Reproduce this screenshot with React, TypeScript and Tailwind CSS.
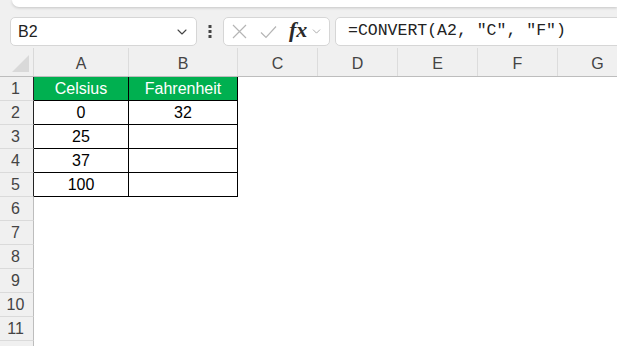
import React from "react";
import { ChevronDown } from "lucide-react";

const COLUMNS = [
  { label: "A", cls: "w-[95px]" },
  { label: "B", cls: "w-[109px]" },
  { label: "C", cls: "w-[80px]" },
  { label: "D", cls: "w-[80px]" },
  { label: "E", cls: "w-[80px]" },
  { label: "F", cls: "w-[80px]" },
  { label: "G", cls: "w-[80px]" },
];

const DATA: [string, string][] = [
  ["0", "32"],
  ["25", ""],
  ["37", ""],
  ["100", ""],
];

function FormulaBar() {
  return (
    <div className="flex items-center h-[29px] mt-[10px] pl-[10px]">
      <div className="flex items-center justify-between w-[187px] h-full bg-white border border-[#d6d6d6] rounded-[5px] pl-[7px] pr-[6px]">
        <span className="text-[16px] text-[#222]">B2</span>
        <ChevronDown className="w-[16px] h-[16px] text-[#444]" strokeWidth={1.6} />
      </div>
      <div className="w-[26px] flex justify-center">
        <svg width="4" height="13" viewBox="0 0 4 13">
          <rect x="0.5" y="0" width="3" height="3" fill="#444" />
          <rect x="0.5" y="5" width="3" height="3" fill="#444" />
          <rect x="0.5" y="10" width="3" height="3" fill="#444" />
        </svg>
      </div>
      <div className="flex items-center w-[107px] h-full bg-white border border-[#d6d6d6] rounded-[5px] pl-[8px]">
        <svg width="15" height="15" viewBox="0 0 15 15" className="mr-[13px]">
          <path d="M1 1 L14 14 M14 1 L1 14" stroke="#b5b5b5" strokeWidth="1.2" fill="none" />
        </svg>
        <svg width="17" height="14" viewBox="0 0 17 14" className="mr-[12px]">
          <path d="M1 7.5 L6 12.5 L16 1.5" stroke="#b5b5b5" strokeWidth="1.2" fill="none" />
        </svg>
        <span className="text-[22px] italic font-bold leading-none text-[#2a2a2a] font-['Liberation_Serif',serif] mb-[3px]">
          fx
        </span>
        <ChevronDown className="w-[13px] h-[13px] ml-[3px] text-[#999]" strokeWidth={1.5} />
      </div>
      <div className="flex items-center flex-1 h-full ml-[5px] -mr-[10px] bg-white border border-[#d6d6d6] rounded-[5px] pl-[12px]">
        <span className="text-[16.5px] text-[#222] font-['Liberation_Mono',monospace]">=CONVERT(A2, "C", "F")</span>
      </div>
    </div>
  );
}

function ColumnHeader() {
  return (
    <div className="flex h-[29px] mt-[2px] border-b border-[#bdbdbd]">
      <div className="w-[34px] shrink-0 border-r border-[#d9d9d9] flex items-end justify-end pr-[4px] pb-[4px]">
        <svg width="17" height="17" viewBox="0 0 17 17">
          <path d="M17 0 L17 17 L0 17 Z" fill="#d9d9d9" />
        </svg>
      </div>
      {COLUMNS.map((c) => (
        <div
          key={c.label}
          className={`${c.cls} shrink-0 border-r border-[#dcdcdc] flex items-center justify-center pt-[4px] text-[16px] text-[#444]`}
        >
          {c.label}
        </div>
      ))}
    </div>
  );
}

function RowHead({ n, dark }: { n?: number; dark?: boolean }) {
  return (
    <div
      className={`w-[34px] shrink-0 h-full flex items-center justify-center pr-[2px] bg-[#f0f0f0] border-b border-[#dadada] border-r text-[16px] text-[#444] ${
        dark ? "border-r-[#222]" : "border-r-[#bdbdbd]"
      }`}
    >
      {n}
    </div>
  );
}

export default function App() {
  return (
    <div className="w-[617px] h-[346px] overflow-hidden bg-[#f0f0f0] font-['Liberation_Sans',Arial,sans-serif]">
      <div className="h-[7px] ml-[12px] bg-white rounded-bl-[8px] shadow-[0_1px_3px_rgba(0,0,0,0.18)]" />
      <FormulaBar />
      <ColumnHeader />
      <div className="bg-white">
        <div className="flex h-[24px]">
          <RowHead n={1} dark />
          <div className="w-[95px] shrink-0 h-full flex items-center justify-center bg-[#00b050] text-white text-[16px] border-r border-b border-black">
            Celsius
          </div>
          <div className="w-[109px] shrink-0 h-full flex items-center justify-center bg-[#00b050] text-white text-[16px] border-r border-b border-black">
            Fahrenheit
          </div>
        </div>
        {DATA.map(([a, b], i) => (
          <div key={i} className="flex h-[24px]">
            <RowHead n={i + 2} dark />
            <div className="w-[95px] shrink-0 h-full flex items-center justify-center text-black text-[16px] border-r border-b border-black">
              {a}
            </div>
            <div className="w-[109px] shrink-0 h-full flex items-center justify-center text-black text-[16px] border-r border-b border-black">
              {b}
            </div>
          </div>
        ))}
        {[6, 7, 8, 9, 10, 11].map((n) => (
          <div key={n} className="flex h-[24px]">
            <RowHead n={n} />
          </div>
        ))}
        <div className="flex h-[24px]">
          <RowHead />
        </div>
      </div>
    </div>
  );
}
